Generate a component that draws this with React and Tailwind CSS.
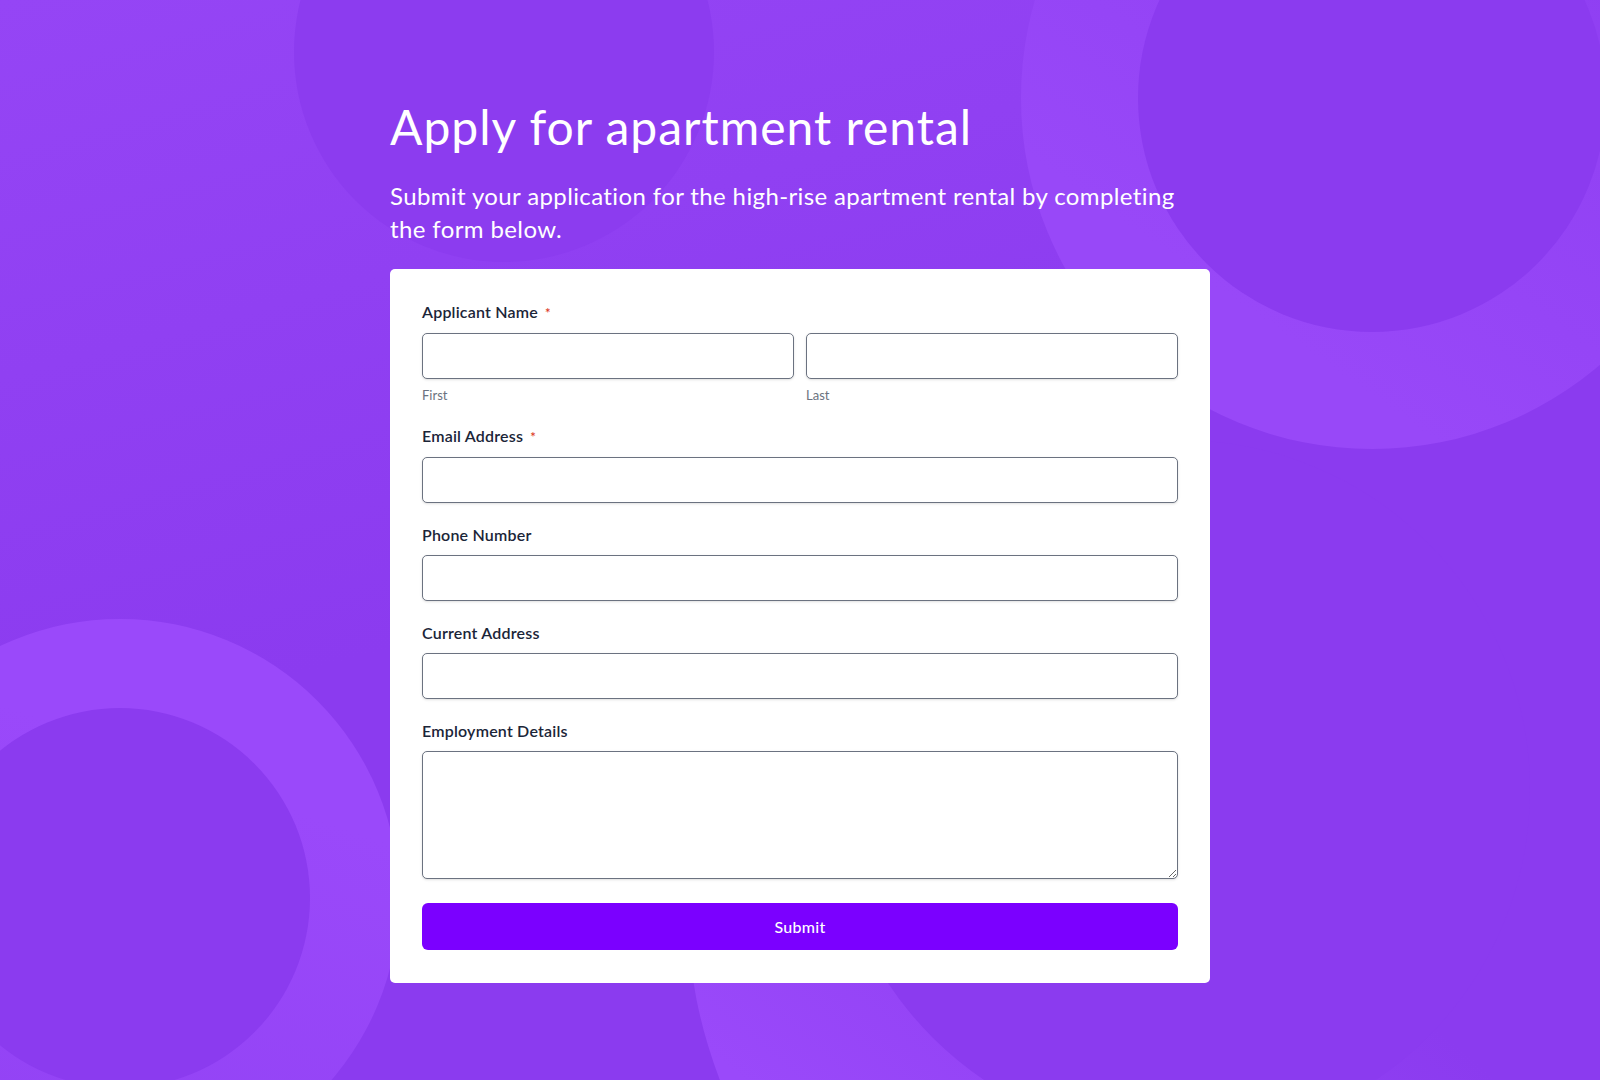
import React from 'react';

const Label = ({ children, required }) => (
  <label className="block text-[16px] leading-6 font-semibold tracking-[0.2px] text-[#1b2538] mb-2">
    {children}
    {required && <span className="ml-[7px] text-[13px] text-[#dc3b26]">*</span>}
  </label>
);

const inputClass =
  'block w-full h-[46px] rounded-[5px] border border-[#6b7280] bg-white px-3 shadow-sm outline-none';

const App = () => {
  return (
    <div className="relative min-h-screen overflow-hidden bg-[#8b3bef] font-['Lato',sans-serif]">
      {/* background shapes */}
      <div className="absolute inset-0 bg-[linear-gradient(165deg,#9545f5_0%,#8b3bef_50%)]" />
      <div className="absolute left-[687px] top-[410px] w-[986px] h-[986px] rounded-full bg-[linear-gradient(40deg,#9a49fa_20%,#8b3bef_55%)]" />
      <div className="absolute left-[830px] top-[440px] w-[700px] h-[700px] rounded-full bg-[#8b3bef]" />
      <div className="absolute left-[294px] top-[-158px] w-[420px] h-[420px] rounded-full bg-[#8c3cef]" />
      <div className="absolute left-[1021px] top-[-253px] w-[702px] h-[702px] rounded-full bg-[linear-gradient(215deg,#8f3ff2_25%,#9848f8_75%)]" />
      <div className="absolute left-[1138px] top-[-136px] w-[468px] h-[468px] rounded-full bg-[#8b3bef]" />
      <div className="absolute left-[-159px] top-[619px] w-[558px] h-[558px] rounded-full bg-[linear-gradient(200deg,#9a49fa_30%,#9242f4_90%)]" />
      <div className="absolute left-[-70px] top-[708px] w-[380px] h-[380px] rounded-full bg-[#8b3bef]" />

      <div className="relative z-10 max-w-[820px] mx-auto pt-[98px] pb-[97px]">
        <h1 className="text-white text-[48px] leading-[1.2] font-normal tracking-[1px]">Apply for apartment rental</h1>
        <p className="text-white text-[24px] leading-[1.4] font-normal tracking-[0.38px] mt-[23px] pr-6">
          Submit your application for the high-rise apartment rental by completing the form below.
        </p>

        <form className="mt-[23px] bg-white rounded-[5px] px-8 pt-[31px] pb-[33px]">
          <div className="flex flex-col gap-5">
            {/* Applicant name */}
            <div>
              <Label required>Applicant Name</Label>
              <div className="grid grid-cols-2 gap-3">
                <div>
                  <input type="text" className={inputClass} />
                  <span className="block mt-2 text-[13px] leading-[17.5px] text-[#6b7280]">First</span>
                </div>
                <div>
                  <input type="text" className={inputClass} />
                  <span className="block mt-2 text-[13px] leading-[17.5px] text-[#6b7280]">Last</span>
                </div>
              </div>
            </div>

            <div>
              <Label required>Email Address</Label>
              <input type="email" className={inputClass} />
            </div>

            <div>
              <Label>Phone Number</Label>
              <input type="tel" className={inputClass} />
            </div>

            <div>
              <Label>Current Address</Label>
              <input type="text" className={inputClass} />
            </div>

            <div>
              <Label>Employment Details</Label>
              <textarea className="block w-full h-32 rounded-[5px] border border-[#6b7280] bg-white px-3 py-2 shadow-sm outline-none" />
            </div>
          </div>

          <button
            type="button"
            className="mt-6 w-full h-[47px] rounded-[6px] bg-[#7b00ff] text-white text-[16px] font-medium tracking-[0.3px]"
          >
            Submit
          </button>
        </form>
      </div>
    </div>
  );
};

export default App;
